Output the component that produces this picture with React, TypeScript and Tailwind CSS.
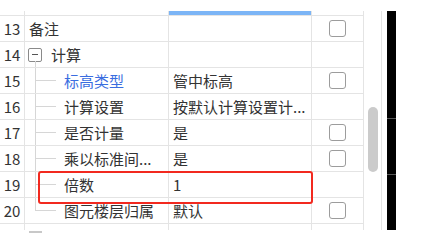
import React from 'react';

type Row = { n: number; label: string; value?: string; check: boolean; kind: 'plain' | 'group' | 'child'; blue?: boolean; last?: boolean };

const rows: Row[] = [
  { n: 13, label: '备注', check: true, kind: 'plain' },
  { n: 14, label: '计算', check: false, kind: 'group' },
  { n: 15, label: '标高类型', value: '管中标高', check: true, kind: 'child', blue: true },
  { n: 16, label: '计算设置', value: '按默认计算设置计...', check: false, kind: 'child' },
  { n: 17, label: '是否计量', value: '是', check: true, kind: 'child' },
  { n: 18, label: '乘以标准间...', value: '是', check: true, kind: 'child' },
  { n: 19, label: '倍数', value: '1', check: false, kind: 'child' },
  { n: 20, label: '图元楼层归属', value: '默认', check: true, kind: 'child', last: true },
];

function Branch({ last }: { last?: boolean }) {
  return (
    <div className="ml-[10px] w-[21px] self-stretch flex flex-col">
      <div className="h-1/2 border-l border-b border-[#d6d6d6]" />
      <div className={last ? 'flex-1' : 'flex-1 border-l border-[#d6d6d6]'} />
    </div>
  );
}

function Check() {
  return <div className="w-[17px] h-[17px] border-[1.5px] border-[#9c9c9c] rounded-[3px] bg-white" />;
}

function TableRow({ r }: { r: Row }) {
  return (
    <div className="flex h-[26px] border-b border-[#e4e4e4]">
      <div className="w-[25px] shrink-0 border-r border-[#e4e4e4] flex items-center justify-center">{r.n}</div>
      <div className="w-[144px] shrink-0 border-r border-[#e4e4e4] flex items-center overflow-hidden whitespace-nowrap">
        {r.kind === 'plain' && <span className="pl-[4px]">{r.label}</span>}
        {r.kind === 'group' && (
          <>
            <div className="relative ml-[3px] w-[14px] h-[14px] border border-[#8a8a8a] rounded-[2px] flex items-center justify-center">
              <div className="w-[6px] h-px bg-[#555]" />
              <div className="absolute left-[6px] top-full h-[9px] w-px bg-[#d6d6d6]" />
            </div>
            <span className="ml-[9px]">{r.label}</span>
          </>
        )}
        {r.kind === 'child' && (
          <>
            <Branch last={r.last} />
            <span className={r.blue ? 'ml-[8px] text-[#3a6de0]' : 'ml-[8px]'}>{r.label}</span>
          </>
        )}
      </div>
      <div className="w-[143px] shrink-0 border-r border-[#e4e4e4] flex items-center pl-[4px] overflow-hidden whitespace-nowrap">{r.value}</div>
      <div className="w-[51px] shrink-0 flex items-center justify-center">{r.check && <Check />}</div>
    </div>
  );
}

export default function App() {
  return (
    <div className="w-[428px] h-[244px] bg-white overflow-hidden relative text-[15px] leading-none text-[#333] font-['Noto_Sans_CJK_SC',sans-serif]">
      <div className="pt-[11px] flex">
        <div className="relative w-[382px] h-[219px] flex border-r border-[#e4e4e4] overflow-hidden">
          <div className="w-[363px] flex flex-col">
            <div className="flex h-[5px] border-b border-[#e4e4e4]">
              <div className="w-[25px] border-r border-[#e4e4e4]" />
              <div className="w-[144px] border-r border-[#e4e4e4]" />
              <div className="w-[143px] border-r border-[#e4e4e4] bg-[#7cb5f6]" />
              <div className="w-[51px]" />
            </div>
            {rows.map(r => <TableRow key={r.n} r={r} />)}
            <div className="flex flex-1">
              <div className="w-[25px] border-r border-[#e4e4e4]" />
              <div className="w-[144px] border-r border-[#e4e4e4]" />
              <div className="w-[143px] border-r border-[#e4e4e4]" />
              <div className="w-[51px]" />
            </div>
          </div>
          <div className="w-[18px] border-l border-[#e4e4e4] flex flex-col items-center">
            <div className="h-[96px]" />
            <div className="w-[10px] h-[65px] rounded-full bg-[#cbcbcb]" />
          </div>
          <div className="absolute left-[38px] top-[160px] w-[275px] h-[33px] border-2 border-[#f2291f] rounded-[3px]" />
        </div>
        <div className="ml-[5px] w-[9px] h-[219px] bg-black flex flex-col">
          <div className="h-[107px]" />
          <div className="h-px bg-[#555]" />
          <div className="h-[55px]" />
          <div className="h-px bg-[#555]" />
        </div>
      </div>
      <div className="ml-[29px] mt-[1px] w-[13px] h-[2px] bg-[#c8c8c8]" />
    </div>
  );
}
